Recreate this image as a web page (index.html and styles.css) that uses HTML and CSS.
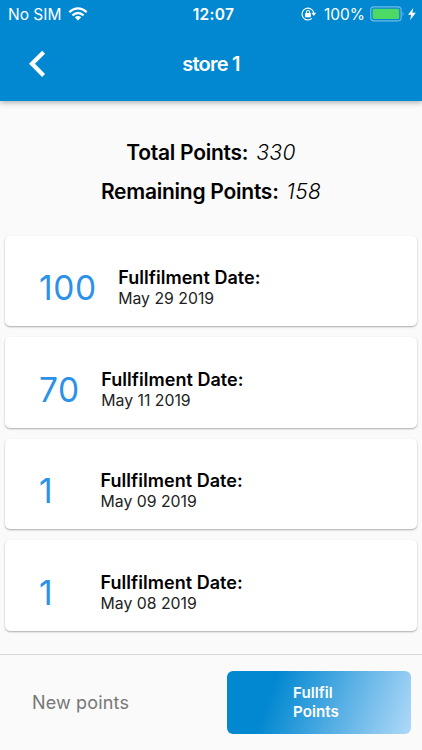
FILE: index.html
```html
<!DOCTYPE html>
<html lang="en">
<head>
<meta charset="utf-8">
<title>store 1</title>
<link rel="stylesheet" href="styles.css">
</head>
<body>
<header class="app-bar">
  <div class="status">
    <div class="status-left"><span class="carrier">No SIM</span>
      <svg class="wifi" width="20" height="14" viewBox="0 0 20 14" fill="none" stroke="#fff" stroke-width="2.3"><path d="M1.3 5.2Q10-2.4 18.7 5.2M4.4 8.4Q10 3.6 15.6 8.4"/><path d="M6.8 10.3Q10 7.6 13.2 10.3L10 13.5Z" fill="#fff" stroke="none"/></svg>
    </div>
    <span class="time">12:07</span>
    <div class="status-right">
      <svg class="lock" width="15" height="14" viewBox="0 0 15 14" fill="none" stroke="#fff" stroke-width="1.1"><path d="M12.8 6A5.9 5.9 0 1 0 11 11.4"/><path d="M10.3 5.8H15.2L12.8 8.9Z" fill="#fff" stroke="none"/><rect x="4.1" y="6.1" width="5.8" height="4.1" rx=".5" fill="#fff" stroke="none"/><path d="M5.5 6.4V5a1.5 1.5 0 0 1 3 0v1.4"/></svg>
      <span class="percent">100%</span>
      <svg class="battery" width="47" height="16" viewBox="0 0 47 16"><rect x=".7" y=".9" width="30.4" height="14" rx="3.2" fill="none" stroke="#70b9e8" stroke-width="1.2"/><rect x="2.6" y="2.8" width="26.6" height="10.2" rx="1.2" fill="#4cd964"/><path d="M32.6 5.4q2 2.4 0 4.9Z" fill="#70b9e8"/><path d="M43.2 2 38 8.8h3.2L40 14.2l5.8-7.4h-3.4Z" fill="#fff"/></svg>
    </div>
  </div>
  <div class="toolbar">
    <svg class="back" width="18" height="28" viewBox="0 0 18 28" fill="none" stroke="#fff" stroke-width="4.2"><path d="M15.6 2.2 4 13.8 15.6 25.4"/></svg>
    <h1 class="title">store 1</h1>
  </div>
</header>
<main>
  <section class="summary">
    <p class="total"><b>Total Points:</b> <i>330</i></p>
    <p class="remaining"><b>Remaining Points:</b> <i>158</i></p>
  </section>
  <section class="list">
    <article class="card"><span class="amount">100</span><div><p class="label">Fullfilment Date:</p><p class="date">May 29 2019</p></div></article>
    <article class="card"><span class="amount">70</span><div><p class="label">Fullfilment Date:</p><p class="date">May 11 2019</p></div></article>
    <article class="card"><span class="amount">1</span><div><p class="label">Fullfilment Date:</p><p class="date">May 09 2019</p></div></article>
    <article class="card"><span class="amount">1</span><div><p class="label">Fullfilment Date:</p><p class="date">May 08 2019</p></div></article>
  </section>
</main>
<footer class="footer">
  <span class="new-points">New points</span>
  <button class="submit"><span>Fullfil<br>Points</span></button>
</footer>
</body>
</html>
```

FILE: styles.css
```css
* { box-sizing: border-box; }
body { margin: 0; width: 422px; height: 750px; overflow: hidden; background: #fafafa; color: #000; font-family: Inter, "Liberation Sans", sans-serif; display: flex; flex-direction: column; }
p, h1 { margin: 0; }
.app-bar { height: 100.5px; flex: none; background: #0288d1; color: #fff; box-shadow: 0 2px 5px rgba(0,0,0,.28); }
.status { height: 28px; display: grid; grid-template-columns: 1fr auto 1fr; align-items: center; font-size: 15.5px; line-height: 28px; white-space: nowrap; }
.status-left { display: flex; align-items: center; padding-left: 8px; gap: 7px; }
.status > *, .status span { position: relative; }
.carrier, .percent { top: .5px; }
.time { font-weight: 600; left: 2.5px; top: .5px; letter-spacing: .3px; }
.status-right { display: flex; align-items: center; justify-content: flex-end; padding-right: 5px; }
.lock { margin-right: 8px; }
.percent { margin-right: 5px; }
.toolbar { height: 72px; display: grid; grid-template-columns: 66px 1fr 66px; align-items: center; }
.back { margin-left: 28px; }
.title { font-size: 20px; line-height: 24px; font-weight: 600; letter-spacing: -.75px; text-align: center; }
.summary { padding-top: 33.5px; text-align: center; font-size: 21px; line-height: 38.5px; height: 135px; }
.summary b { font-weight: 600; letter-spacing: -.25px; margin-right: 2px; }
.summary i { font-weight: 300; letter-spacing: .35px; }
.list { display: flex; flex-direction: column; gap: 11px; padding: 0 5px; }
.card { height: 90.5px; border-radius: 5px; background: #fff; box-shadow: 0 1px 2px rgba(0,0,0,.32); display: grid; grid-template-columns: minmax(61.5px, auto) 1fr; padding: 31.5px 0 0 34px; }
.amount { color: #2b92e7; font-size: 33.5px; line-height: 42px; letter-spacing: .6px; padding-right: 21.5px; }
.label { font-size: 18px; font-weight: 600; line-height: 22px; letter-spacing: .04px; }
.date { font-size: 15.8px; line-height: 19px; color: #222; }
.footer { margin-top: auto; height: 96px; flex: none; border-top: 1px solid #d8d8d8; display: flex; align-items: center; justify-content: space-between; padding: 0 11px 0 32px; }
.new-points { color: #777; font-size: 18px; letter-spacing: .15px; }
.submit { width: 184px; height: 63px; border: 0; border-radius: 6px; color: #fff; background: linear-gradient(110deg, #0288d1 25%, #bbdefb 105%); font: 600 15.2px/18.5px Inter, sans-serif; text-align: left; padding: 0 0 0 66px; }
```
